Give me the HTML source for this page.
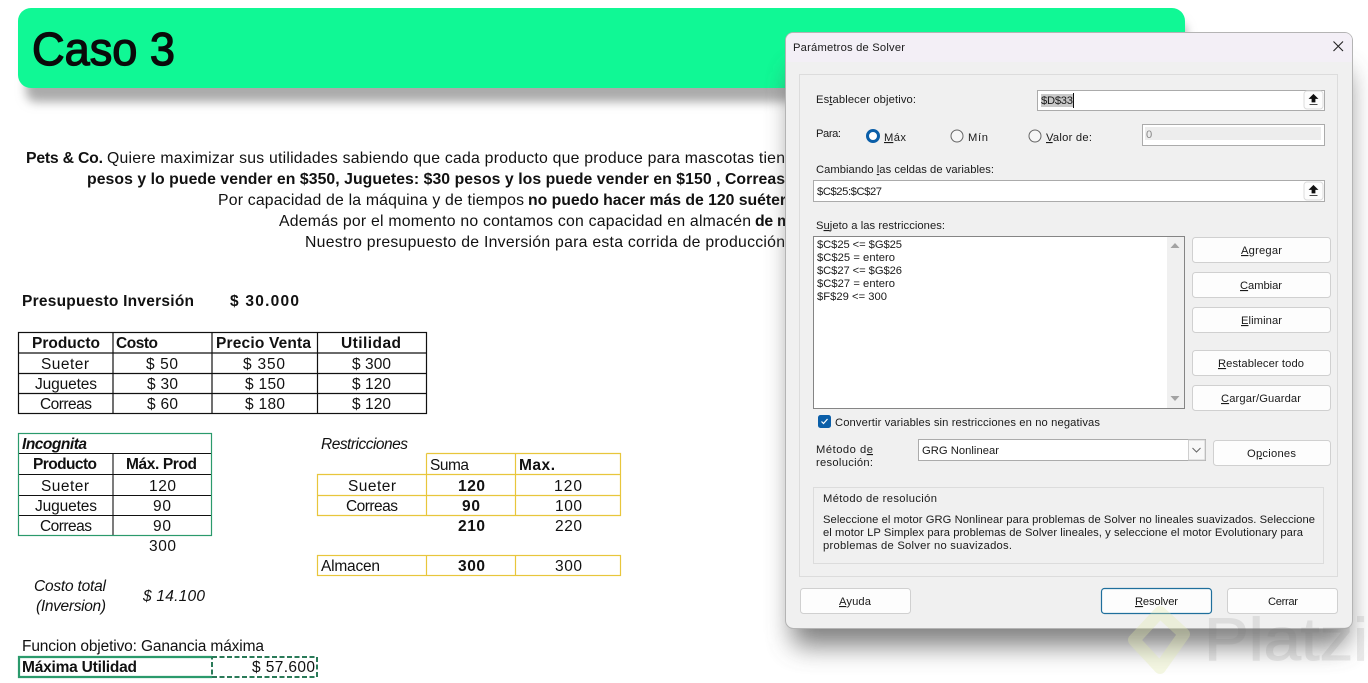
<!DOCTYPE html>
<html><head><meta charset="utf-8"><style>
html,body{margin:0;padding:0;background:#fff;width:1368px;height:683px;overflow:hidden}
svg{display:block}
text{font-family:"Liberation Sans",sans-serif;fill:#111;white-space:pre}
.p{font-size:15.8px}
.t{font-size:15.5px}
.b{font-weight:700}
.i{font-style:italic}
.d text,.d{font-size:11.2px}
.d text{fill:#1a1a1a}
.u{text-decoration:underline}
.btn{fill:#fdfdfd;stroke:#d0d0d0;stroke-width:1}
</style></head><body>
<svg width="1368" height="683" viewBox="0 0 1368 683" xmlns="http://www.w3.org/2000/svg">
<defs>
<filter id="s1" filterUnits="userSpaceOnUse" x="0" y="0" width="1368" height="140"><feGaussianBlur stdDeviation="5"/></filter>
<filter id="s2" filterUnits="userSpaceOnUse" x="700" y="0" width="668" height="683"><feGaussianBlur stdDeviation="13"/></filter>
</defs>
<rect width="1368" height="683" fill="#fff"/>
<rect x="26" y="22" width="1160" height="80" rx="10" fill="#ababab" filter="url(#s1)"/>
<rect x="18" y="8" width="1167" height="80" rx="13" fill="#10f895"/>
<text x="32" y="65" font-size="46" textLength="143" lengthAdjust="spacingAndGlyphs" style="fill:#0a0a0a;stroke:#0a0a0a;stroke-width:1.3">Caso 3</text>

<text class="p b" x="26" y="163" textLength="77">Pets &amp; Co.</text>
<text class="p" x="107" y="163" textLength="678">Quiere maximizar sus utilidades sabiendo que cada producto que produce para mascotas tien</text>
<text class="p b" x="87" y="184" textLength="698">pesos y lo puede vender en $350, Juguetes: $30 pesos y los puede vender en $150 , Correas</text>
<text class="p" x="218" y="205" textLength="306">Por capacidad de la máquina y de tiempos</text>
<text class="p b" x="528" y="205" textLength="258">no puedo hacer más de 120 suéter</text>
<text class="p" x="279" y="226" textLength="472">Además por el momento no contamos con capacidad en almacén</text>
<text class="p b" x="755" y="226" textLength="36">de m</text>
<text class="p" x="305" y="247" textLength="480">Nuestro presupuesto de Inversión para esta corrida de producción</text>

<text class="t b" x="22" y="306" textLength="172">Presupuesto Inversión</text>
<text class="t b" x="230" y="306" textLength="69">$ 30.000</text>

<g fill="none" stroke="#111" stroke-width="1.2">
<rect x="18.5" y="332.5" width="408" height="81"/>
<path d="M18 353H427M18 373.5H427M18 393.5H427M113 332V413M212 332V413M317.5 332V413"/>
</g>
<text class="t b" x="32" y="348" textLength="68">Producto</text>
<text class="t b" x="116" y="348" textLength="42">Costo</text>
<text class="t b" x="216" y="348" textLength="95">Precio Venta</text>
<text class="t b" x="341" y="348" textLength="60">Utilidad</text>
<text class="t" x="41" y="369" textLength="48">Sueter</text>
<text class="t" x="146" y="369" textLength="32">$ 50</text>
<text class="t" x="243" y="369" textLength="42">$ 350</text>
<text class="t" x="352" y="369" textLength="39">$ 300</text>
<text class="t" x="35" y="389" textLength="62">Juguetes</text>
<text class="t" x="147" y="389" textLength="31">$ 30</text>
<text class="t" x="245" y="389" textLength="40">$ 150</text>
<text class="t" x="352" y="389" textLength="39">$ 120</text>
<text class="t" x="40" y="409" textLength="52">Correas</text>
<text class="t" x="147" y="409" textLength="31">$ 60</text>
<text class="t" x="245" y="409" textLength="40">$ 180</text>
<text class="t" x="352" y="409" textLength="39">$ 120</text>

<path d="M18 453.5H212M18 474.5H212M18 495.5H212M18 515.5H212M113 453.5V535.5" fill="none" stroke="#111" stroke-width="1.1"/>
<rect x="18.5" y="433.5" width="193" height="102" fill="none" stroke="#2b9a6c" stroke-width="1.2"/>
<text class="t b i" x="22" y="449" textLength="65">Incognita</text>
<text class="t b" x="33" y="469" textLength="64">Producto</text>
<text class="t b" x="126" y="469" textLength="71">Máx. Prod</text>
<text class="t" x="41" y="491" textLength="48">Sueter</text>
<text class="t" x="149" y="491" textLength="27">120</text>
<text class="t" x="35" y="511" textLength="62">Juguetes</text>
<text class="t" x="153" y="511" textLength="18">90</text>
<text class="t" x="40" y="531" textLength="52">Correas</text>
<text class="t" x="153" y="531" textLength="18">90</text>
<text class="t" x="149" y="551" textLength="27">300</text>

<text class="t i" x="321" y="449" textLength="87">Restricciones</text>
<g fill="none" stroke="#e8c63c" stroke-width="1.2">
<path d="M426.5 453.5H620.5V515.5H317.5V474.5H620.5M317.5 495.5H620.5M426.5 453.5V515.5M515.5 453.5V515.5"/>
<rect x="317.5" y="555.5" width="303" height="20"/>
<path d="M426.5 555V576M515.5 555V576"/>
</g>
<text class="t" x="430" y="470" textLength="39">Suma</text>
<text class="t b" x="519" y="470" textLength="36">Max.</text>
<text class="t" x="348" y="491" textLength="48">Sueter</text>
<text class="t b" x="458" y="491" textLength="27">120</text>
<text class="t" x="554" y="491" textLength="28">120</text>
<text class="t" x="346" y="511" textLength="52">Correas</text>
<text class="t b" x="462" y="511" textLength="18">90</text>
<text class="t" x="555" y="511" textLength="27">100</text>
<text class="t b" x="458" y="531" textLength="27">210</text>
<text class="t" x="555" y="531" textLength="27">220</text>
<text class="t" x="321" y="571" textLength="59">Almacen</text>
<text class="t b" x="458" y="571" textLength="27">300</text>
<text class="t" x="555" y="571" textLength="27">300</text>

<text class="t i" x="34" y="591" textLength="72">Costo total</text>
<text class="t i" x="36" y="611" textLength="70">(Inversion)</text>
<text class="t i" x="143" y="601" textLength="62">$ 14.100</text>
<text class="t" x="22" y="651" textLength="242">Funcion objetivo: Ganancia máxima</text>

<!-- dialog shadow -->
<rect x="792" y="70" width="556" height="576" rx="10" fill="#555" opacity=".75" filter="url(#s2)"/>

<path d="M212 657H19V677H212" fill="none" stroke="#2b9a6c" stroke-width="2.2"/>
<path d="M212 657H317V677H212V657" fill="none" stroke="#2a7a58" stroke-width="2" stroke-dasharray="5 2.5"/>
<text class="t b" x="22" y="672" textLength="115">Máxima Utilidad</text>
<text class="t" x="252" y="672" textLength="63">$ 57.600</text>

<!-- dialog -->
<rect x="785.5" y="32.5" width="567" height="596" rx="8" fill="#f0f0f0" stroke="#b4b4b4"/>
<path d="M786 62V40a7 7 0 0 1 7-7H1345a7 7 0 0 1 7 7V62Z" fill="#f3eff6"/>
<g class="d">
<text x="793" y="51" textLength="112">Parámetros de Solver</text>
<path d="M1333.5 41.5L1343 51M1343 41.5L1333.5 51" stroke="#222" stroke-width="1.1" fill="none"/>
<rect x="799.5" y="74.5" width="538" height="502" fill="#f0f0f0" stroke="#dcdcdc"/>

<text x="816" y="103" textLength="100">Es<tspan class="u">t</tspan>ablecer objetivo:</text>
<rect x="1037.5" y="90.5" width="287" height="20" fill="#fff" stroke="#ababab"/>
<rect x="1041" y="94" width="32" height="13" fill="#c8c8c8"/>
<text x="1041" y="104" textLength="32">$D$33</text>
<path d="M1073.5 93V108" stroke="#111"/>
<rect x="1304" y="91" width="19" height="18" rx="3" fill="#fdfdfd" stroke="#dcdcdc"/>
<path d="M1313.5 94.5l4 4h-2.500v3.500h-3v-3.500h-2.500ZM1309.5 104.5h8" fill="#111" stroke="#111" stroke-width=".8"/>

<text x="816" y="137" textLength="25">Para:</text>
<circle cx="873" cy="136" r="5.5" fill="#fff" stroke="#0a5ea8" stroke-width="3"/>
<circle cx="873" cy="136" r="2.5" fill="#fff"/>
<text x="884" y="141" textLength="22"><tspan class="u">M</tspan>áx</text>
<circle cx="957" cy="136" r="6" fill="#f6f6f6" stroke="#666"/>
<text x="968" y="141" textLength="20">Mín</text>
<circle cx="1035" cy="136" r="6" fill="#f6f6f6" stroke="#666"/>
<text x="1046" y="141" textLength="46"><tspan class="u">V</tspan>alor de:</text>
<rect x="1142.5" y="124.5" width="182" height="21" fill="#fff" stroke="#ababab"/>
<rect x="1145" y="127" width="176" height="13" fill="#ededed"/>
<text x="1146" y="138" textLength="6" style="fill:#888">0</text>

<text x="816" y="173" textLength="178">Cambiando <tspan class="u">l</tspan>as celdas de variables:</text>
<rect x="813.5" y="180.5" width="511" height="21" fill="#fff" stroke="#ababab"/>
<text x="817" y="195" textLength="65">$C$25:$C$27</text>
<rect x="1304" y="182" width="19" height="18" rx="3" fill="#fdfdfd" stroke="#dcdcdc"/>
<path d="M1313.5 185.5l4 4h-2.500v3.500h-3v-3.500h-2.500ZM1309.5 195.5h8" fill="#111" stroke="#111" stroke-width=".8"/>

<text x="816" y="229" textLength="129">S<tspan class="u">u</tspan>jeto a las restricciones:</text>
<rect x="813.5" y="236.5" width="371" height="172" fill="#fff" stroke="#858585"/>
<rect x="1167" y="237" width="17" height="171" fill="#f0f0f0"/>
<path d="M1175 243l4.500 5h-9ZM1175 401l4.500-5h-9Z" fill="#a3a3a3"/>
<text x="817" y="248" textLength="85">$C$25 &lt;= $G$25</text>
<text x="817" y="261" textLength="78">$C$25 = entero</text>
<text x="817" y="274" textLength="85">$C$27 &lt;= $G$26</text>
<text x="817" y="287" textLength="78">$C$27 = entero</text>
<text x="817" y="300" textLength="70">$F$29 &lt;= 300</text>

<rect x="818" y="415" width="13" height="13" rx="2.5" fill="#0a5ea8"/>
<path d="M821.5 421.5l2 2 4-4.500" stroke="#fff" fill="none" stroke-width="1.2"/>
<text x="835" y="426" textLength="265">Convertir variables sin restricciones en no negativas</text>
<text x="816" y="453" textLength="57">Método d<tspan class="u">e</tspan></text>
<text x="816" y="466" textLength="57">resolución:</text>
<rect x="918.5" y="439.5" width="287" height="21" fill="#fff" stroke="#ababab"/>
<rect x="1188.5" y="440" width="16.5" height="20" fill="#f8f8f8" stroke="#cfcfcf"/>
<path d="M1192.5 448l4 4 4-4" fill="none" stroke="#666"/>
<text x="922" y="454" textLength="77">GRG Nonlinear</text>

<rect class="btn" x="1192.5" y="237.5" width="138" height="25" rx="3"/>
<rect class="btn" x="1192.5" y="272.5" width="138" height="25" rx="3"/>
<rect class="btn" x="1192.5" y="307.5" width="138" height="25" rx="3"/>
<rect class="btn" x="1192.5" y="350.5" width="138" height="25" rx="3"/>
<rect class="btn" x="1192.5" y="385.5" width="138" height="25" rx="3"/>
<rect class="btn" x="1213.5" y="440.5" width="117" height="25" rx="3"/>
<text x="1241" y="254" textLength="41"><tspan class="u">A</tspan>gregar</text>
<text x="1240" y="289" textLength="42"><tspan class="u">C</tspan>ambiar</text>
<text x="1241" y="324" textLength="41"><tspan class="u">E</tspan>liminar</text>
<text x="1218" y="367" textLength="86"><tspan class="u">R</tspan>establecer todo</text>
<text x="1221" y="402" textLength="80"><tspan class="u">C</tspan>argar/Guardar</text>
<text x="1247" y="457" textLength="49">O<tspan class="u">p</tspan>ciones</text>

<rect x="813.5" y="487.5" width="510" height="76" fill="#f0f0f0" stroke="#dcdcdc"/>
<text x="823" y="502" textLength="114">Método de resolución</text>
<text x="823" y="523" textLength="492">Seleccione el motor GRG Nonlinear para problemas de Solver no lineales suavizados. Seleccione</text>
<text x="823" y="536" textLength="480">el motor LP Simplex para problemas de Solver lineales, y seleccione el motor Evolutionary para</text>
<text x="823" y="549" textLength="189">problemas de Solver no suavizados.</text>

<rect class="btn" x="800.5" y="588.5" width="110" height="25" rx="3"/>
<rect x="1101.5" y="588.5" width="110" height="25" rx="3" fill="#fdfdfd" stroke="#1f6f9c" stroke-width="1.2"/>
<rect class="btn" x="1227.5" y="588.5" width="110" height="25" rx="3"/>
<text x="839" y="605" textLength="32"><tspan class="u">A</tspan>yuda</text>
<text x="1135" y="605" textLength="43"><tspan class="u">R</tspan>esolver</text>
<text x="1268" y="605" textLength="30">Cerrar</text>
</g>

<!-- watermark -->
<path d="M1160 612L1184 634 1160 668 1134 640Z" fill="none" stroke="#e0e8a8" stroke-width="12" stroke-linejoin="round" opacity=".32"/>
<text x="1204" y="660" font-size="60" textLength="164" lengthAdjust="spacingAndGlyphs" style="fill:#777;stroke:#777;stroke-width:1;opacity:.15">Platzi</text>
</svg>
</body></html>
